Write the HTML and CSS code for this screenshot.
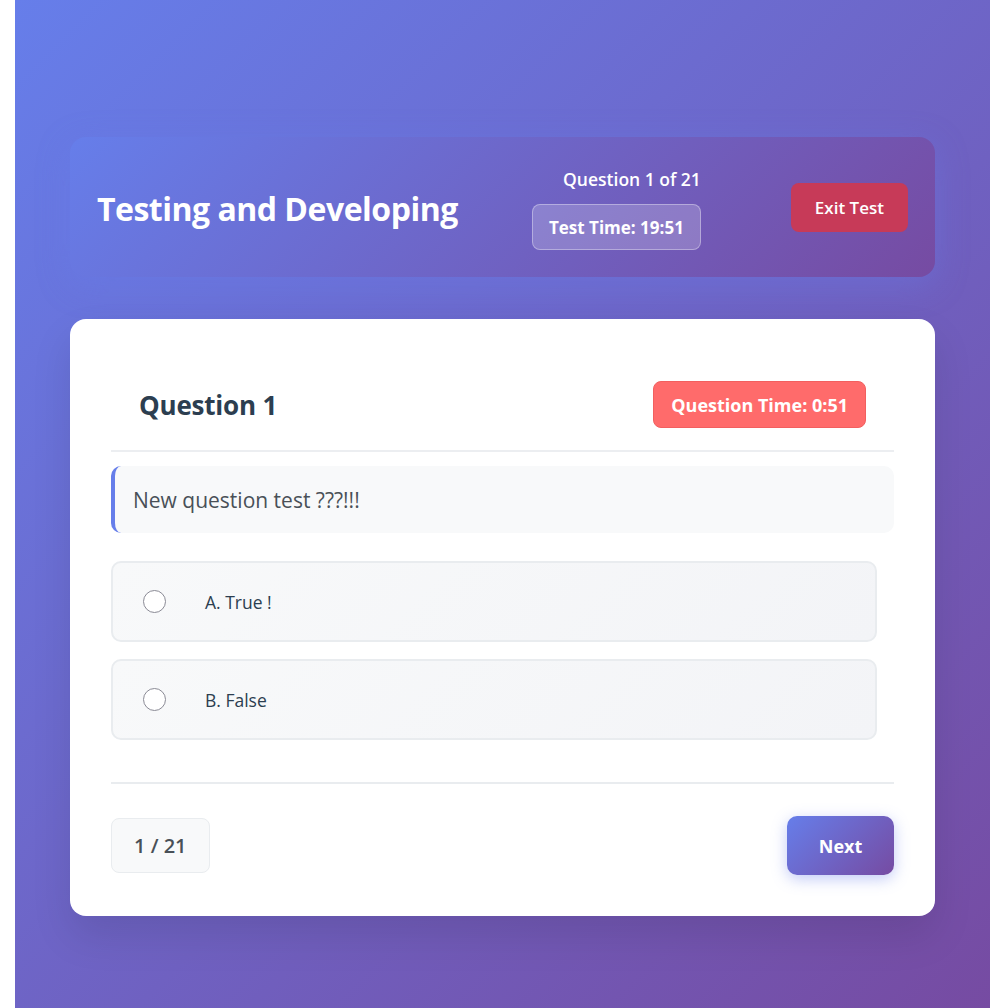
FILE: index.html
```html
<!DOCTYPE html>
<html lang="en">
<head>
<meta charset="utf-8">
<title>Testing and Developing</title>
<link rel="stylesheet" href="styles.css">
</head>
<body>
<div class="page">
  <div class="container">
    <header class="test-header">
      <h1 class="test-title">Testing and Developing</h1>
      <div class="header-right">
        <div class="test-progress">
          <div class="progress-text">Question 1 of 21</div>
          <div class="test-timer">Test Time: 19:51</div>
        </div>
        <button class="exit-btn">Exit Test</button>
      </div>
    </header>

    <main class="question-card">
      <div class="question-head">
        <h2 class="question-number">Question 1</h2>
        <div class="question-timer">Question Time: 0:51</div>
      </div>
      <div class="question-text">New question test ???!!!</div>
      <div class="options">
        <label class="option"><span class="radio"></span><span class="option-label">A. True !</span></label>
        <label class="option"><span class="radio"></span><span class="option-label">B. False</span></label>
      </div>
      <div class="card-footer">
        <div class="page-counter">1 / 21</div>
        <button class="next-btn">Next</button>
      </div>
    </main>
  </div>
</div>
</body>
</html>
```

FILE: styles.css
```css
* { box-sizing: border-box; }

body {
  margin: 0;
  background: #ffffff;
  font-family: "Open Sans", "Noto Sans", sans-serif;
}

.page {
  margin-left: 15px;
  width: 975px;
  min-height: 1008px;
  padding: 137px 0 92px;
  background: linear-gradient(135deg, #667eea 0%, #764ba2 100%);
}

.container {
  width: 865px;
  margin: 0 auto;
}

.test-header {
  height: 140px;
  padding: 0 27px;
  display: flex;
  align-items: center;
  justify-content: space-between;
  border-radius: 16px;
  background: linear-gradient(135deg, #667eea 0%, #764ba2 100%);
  box-shadow: 0 8px 32px rgba(102, 126, 234, 0.35);
  margin-bottom: 42px;
  color: #ffffff;
}

.test-title {
  margin: 0;
  padding-top: 3px;
  font-size: 32px;
  font-weight: 700;
  letter-spacing: -0.5px;
}

.header-right {
  display: flex;
  align-items: center;
  gap: 90px;
}

.test-progress {
  display: flex;
  flex-direction: column;
  align-items: flex-end;
  gap: 10px;
}

.progress-text {
  font-size: 17.5px;
  font-weight: 600;
  line-height: 30px;
}

.test-timer {
  height: 46px;
  display: flex;
  align-items: center;
  padding: 0 16px;
  font-size: 17px;
  font-weight: 700;
  background: rgba(255, 255, 255, 0.2);
  border: 1px solid rgba(255, 255, 255, 0.35);
  border-radius: 8px;
}

.exit-btn {
  height: 49px;
  padding: 0 24px;
  border: none;
  border-radius: 8px;
  background: #c73a58;
  color: #ffffff;
  font-family: inherit;
  font-size: 17px;
  font-weight: 600;
}

.question-card {
  display: block;
  background: #ffffff;
  border-radius: 16px;
  padding: 41px;
  box-shadow: 0 20px 40px rgba(0, 0, 0, 0.1);
}

.question-head {
  display: flex;
  align-items: center;
  justify-content: space-between;
  padding: 21px 28px 22px;
  border-bottom: 2px solid #eceef1;
  margin-bottom: 14px;
}

.question-number {
  margin: 0;
  font-size: 26px;
  font-weight: 700;
  color: #2c3e50;
  letter-spacing: -0.2px;
}

.question-timer {
  height: 47px;
  display: flex;
  align-items: center;
  padding: 0 17px;
  background: #ff6b6b;
  border: 1px solid #f25f5f;
  border-radius: 8px;
  color: #ffffff;
  font-size: 18px;
  font-weight: 700;
}

.question-text {
  background: #f8f9fa;
  border-left: 4px solid #667eea;
  border-radius: 10px;
  padding: 20px 18px 19px;
  font-size: 21px;
  line-height: 28px;
  color: #495057;
}

.options {
  margin: 28px 17px 0 0;
  display: flex;
  flex-direction: column;
  gap: 17px;
}

.option {
  height: 81px;
  display: flex;
  align-items: center;
  padding: 0 30px;
  border: 2px solid #e9ecef;
  border-radius: 10px;
  background: linear-gradient(135deg, #f8f9fa 0%, #f3f4f7 100%);
}

.radio {
  width: 23px;
  height: 23px;
  border: 1px solid #8a8a95;
  border-radius: 50%;
  background: #ffffff;
  flex-shrink: 0;
}

.option-label {
  margin-left: 39px;
  font-size: 17.5px;
  color: #2c3e50;
}

.card-footer {
  margin-top: 42px;
  padding-top: 32px;
  border-top: 2px solid #e9ecef;
  display: flex;
  align-items: center;
  justify-content: space-between;
}

.page-counter {
  height: 55px;
  display: flex;
  align-items: center;
  padding: 0 22px;
  background: #f8f9fa;
  border: 1px solid #e9ecef;
  border-radius: 8px;
  font-size: 20px;
  font-weight: 600;
  color: #495057;
}

.next-btn {
  width: 107px;
  height: 59px;
  border: none;
  border-radius: 10px;
  background: linear-gradient(135deg, #667eea 0%, #764ba2 100%);
  box-shadow: 0 4px 15px rgba(102, 126, 234, 0.4);
  color: #ffffff;
  font-family: inherit;
  font-size: 18px;
  font-weight: 700;
}
```
